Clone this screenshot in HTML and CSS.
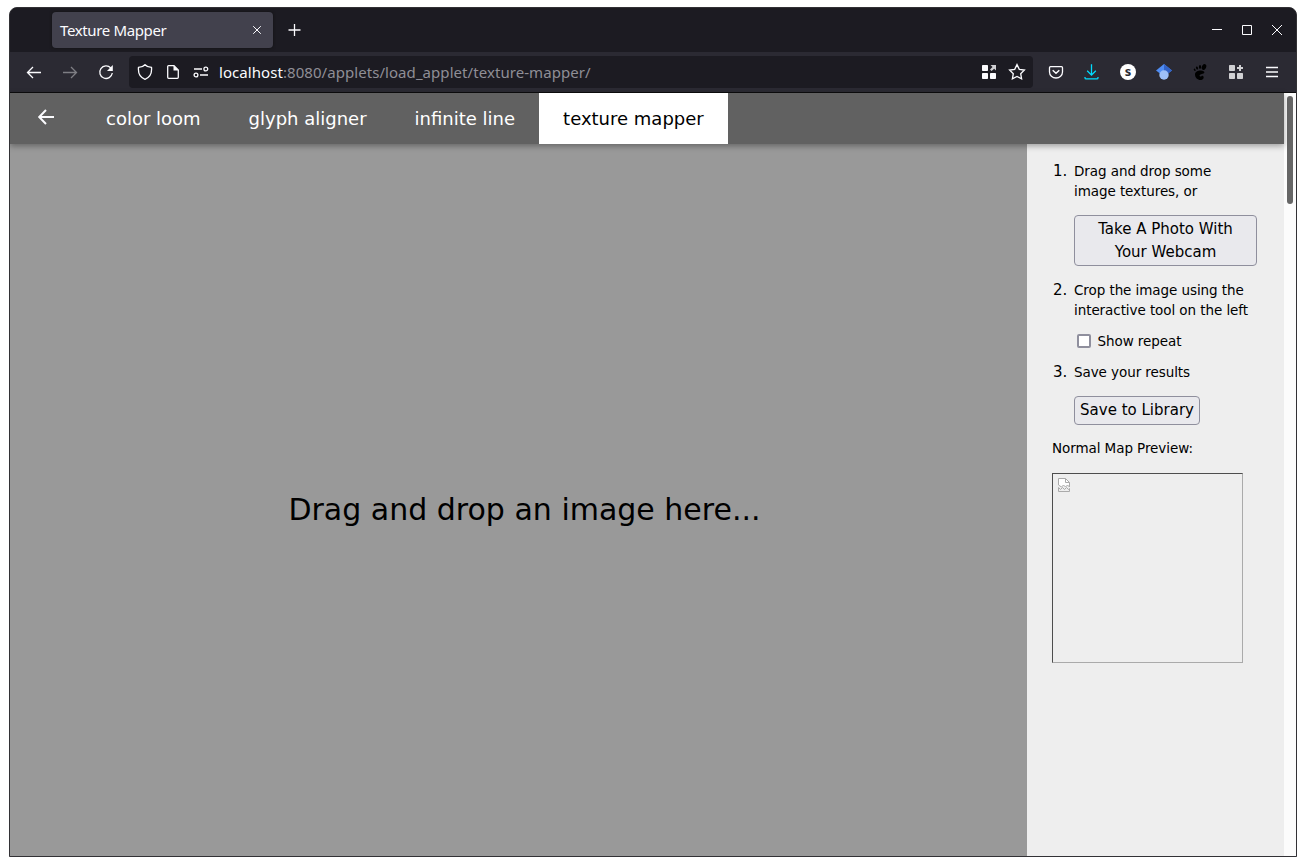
FILE: index.html
```html
<!DOCTYPE html>
<html lang="en">
<head>
<meta charset="utf-8">
<title>Texture Mapper</title>
<link rel="stylesheet" href="styles.css">
</head>
<body>
<div class="window">
  <header class="tabbar">
    <div class="tab"><span class="tab-title">Texture Mapper</span>
      <svg class="tab-close" width="10" height="10" viewBox="0 0 10 10"><path d="M1.200 1.200l7.600 7.600M8.800 1.200L1.200 8.800"/></svg>
    </div>
    <svg class="plus" width="14" height="14" viewBox="0 0 14 14"><path d="M6.500 1v12M.5 7h12"/></svg>
    <div class="controls">
      <svg width="12" height="12" viewBox="0 0 12 12"><path d="M1 5.500h10"/></svg>
      <svg width="12" height="12" viewBox="0 0 12 12"><path d="M1.500 1.500h9v9h-9z"/></svg>
      <svg width="12" height="12" viewBox="0 0 12 12"><path d="M1 1l10 10M11 1L1 11"/></svg>
    </div>
  </header>
  <div class="toolbar">
    <div class="nav-icons">
      <svg width="16" height="16" viewBox="0 0 16 16"><path d="M15 8.500H1.500M7 3L1.500 8.500 7 14"/></svg>
      <svg class="dim" width="16" height="16" viewBox="0 0 16 16"><path d="M1 8.500h13.500M9 3l5.500 5.500L9 14"/></svg>
      <svg width="16" height="16" viewBox="0 0 16 16"><path d="M12.800 4A6.300 6.300 0 1 0 14.300 9"/><path class="fill" d="M14.800 1v6H9z"/></svg>
    </div>
    <div class="urlbar">
      <svg width="16" height="16" viewBox="0 0 16 16"><path d="M8 .8C6.500 2.500 4 3.300 1.500 3.400 1 8.500 3 13.500 8 15.300c5-1.800 7-6.800 6.500-11.900C12 3.300 9.500 2.500 8 .8z"/></svg>
      <svg width="16" height="16" viewBox="0 0 16 16"><path d="M3.500 1.700H9l4.300 4.300v7.300q0 1-1 1H3.700q-1 0-1-1V2.500q0-.8.8-.8z"/><path class="fill" d="M8.500 1.500v5h5z"/></svg>
      <svg width="16" height="16" viewBox="0 0 16 16"><path d="M1 5h8M7 11h8"/><circle cx="12.800" cy="5" r="1.900"/><circle cx="3" cy="11" r="1.900"/></svg>
      <span class="url"><b>localhost</b>:8080/applets/load_applet/texture-mapper/</span>
      <svg class="solid" width="16" height="16" viewBox="0 0 16 16"><rect x="1" y="1" width="6" height="6" rx=".8"/><rect x="1" y="9" width="6" height="6" rx=".8"/><rect x="9" y="9" width="6" height="6" rx=".8"/><path class="pale" d="M9.500 1H15v5.500l-1.800-1.800L10.500 7 9 5.500l2.500-2.600z"/></svg>
      <svg class="star" width="18" height="18" viewBox="0 0 18 18"><path d="M9 1.600l2.300 4.700 5.100.7-3.700 3.700.9 5.200L9 13.400l-4.600 2.500.9-5.200L1.600 7l5.100-.7z"/></svg>
    </div>
    <div class="extensions">
      <svg width="16" height="16" viewBox="0 0 16 16"><path d="M2.500 2.700h11q1 0 1 1V8a6.500 6 0 0 1-13 0V3.700q0-1 1-1z"/><path class="chevron" d="M4.700 6.200L8 9.300l3.300-3.100"/></svg>
      <svg class="download" width="16" height="16" viewBox="0 0 16 16"><path d="M7.500.2v11M3.200 6.700l4.300 4.400 4.300-4.400M1 13v.7q0 1.200 1.200 1.200h10.600q1.200 0 1.200-1.200V13"/></svg>
      <span class="s-badge">s</span>
      <svg class="scholar" width="16" height="16" viewBox="0 0 16 16"><path fill="#4f8cf3" d="M8 0L0 6.500 4 9.500h8l4-3z"/><path fill="#3262c5" d="M8 0l8 6.500-4 3L8 7z"/><circle cx="8" cy="11" r="4.700" fill="#9dc0f9"/></svg>
      <svg class="foot" width="16" height="16" viewBox="0 0 16 16"><ellipse cx="12" cy="3" rx="2.100" ry="3" transform="rotate(25 12 3)"/><ellipse cx="8" cy="2.900" rx="1.100" ry="1.900"/><ellipse cx="5" cy="4" rx="1" ry="1.600" transform="rotate(-20 5 4)"/><ellipse cx="2.700" cy="5.800" rx=".8" ry="1.300" transform="rotate(-30 2.700 5.800)"/><path d="M12 7.500C9 5.500 3 7 3 10.500c0 3 2.500 5.500 5.500 5.500 2.800 0 4-2.500 2.500-4-1-.8-1.500.5-2.500.5S7 11 8.500 10.500 13.500 9.500 12 7.500z"/></svg>
      <svg class="solid pale" width="16" height="16" viewBox="0 0 16 16"><rect x="1" y="1" width="6" height="6" rx=".8"/><rect x="1" y="9" width="6" height="6" rx=".8"/><rect x="9" y="9" width="6" height="6" rx=".8"/><path d="M11 1h2v2h2v2h-2v2h-2V5H9V3h2z"/></svg>
      <svg width="16" height="16" viewBox="0 0 16 16"><path d="M2 3.500h12M2 8h12M2 12.500h12"/></svg>
    </div>
  </div>
  <div class="viewport">
    <div class="page">
      <nav class="appbar">
        <svg class="back" width="18" height="18" viewBox="0 0 18 18"><path d="M17 9H2.500M9 2L2.200 9 9 16"/></svg>
        <a class="link">color loom</a><a class="link">glyph aligner</a><a class="link">infinite line</a><a class="link active">texture mapper</a>
      </nav>
      <main class="workspace">
        <section class="drop"><span class="drop-text">Drag and drop an image here...</span></section>
        <aside class="panel">
          <div class="step"><span class="num">1.</span><p class="copy">Drag and drop some<br>image textures, or</p></div>
          <button class="btn photo">Take A Photo With<br>Your Webcam</button>
          <div class="step crop"><span class="num">2.</span><p class="copy">Crop the image using the<br>interactive tool on the left</p></div>
          <label class="repeat"><span class="box"></span><span class="copy">Show repeat</span></label>
          <div class="step"><span class="num">3.</span><p class="copy">Save your results</p></div>
          <button class="btn save">Save to Library</button>
          <p class="copy preview-title">Normal Map Preview:</p>
          <div class="preview"><svg width="12" height="14" viewBox="0 0 12 14"><path class="paper" d="M.5 7V.5h7l4 4V9l-2-2-2 2-2-2-2 2z"/><path d="M7.500.5v4h4M.5 13.500v-4l2 2 2-2 2 2 2-2 2 2 1-1v3z"/></svg></div>
        </aside>
      </main>
    </div>
    <div class="scrollbar"><div class="thumb"></div></div>
  </div>
</div>
</body>
</html>
```
FILE: styles.css
```css
* { box-sizing: border-box; }
body { margin: 0; padding: 7px 9px; background: #fff; font-family: "DejaVu Sans", sans-serif; color: #000; }
p { margin: 0; }
svg { display: block; flex: none; fill: none; stroke: #fbfbfe; stroke-width: 1.3; }
.window { width: 1288px; height: 850px; border: 1px solid #323135; border-radius: 8px 8px 0 0; overflow: hidden; display: flex; flex-direction: column; background: #1c1b22; }

.tabbar { height: 44px; flex: none; display: flex; align-items: center; padding: 0 13px 0 42px; background: #1c1b22; }
.tab { width: 221px; height: 36px; border-radius: 4px; background: #42414d; box-shadow: 0 0 3px #111; display: flex; align-items: center; justify-content: space-between; padding: 0 11px 0 8px; }
.tab-title { font: 15px/20px "Noto Sans", sans-serif; letter-spacing: -.36px; color: #fbfbfe; }
.tab-close { stroke-width: 1; }
.plus { margin-left: 15px; }
.controls { margin-left: auto; display: flex; gap: 18px; }
.controls svg { stroke-width: 1; }

.toolbar { height: 41px; flex: none; display: flex; align-items: center; background: #2b2a33; border-bottom: 1px solid #0c0c0d; padding-left: 16px; }
.nav-icons { display: flex; gap: 20px; }
.dim { opacity: .4; }
.fill { fill: #fbfbfe; stroke: none; }
.chevron { stroke-width: 1.500; }
.urlbar { width: 904px; height: 32px; margin-left: 15px; padding: 0 7px 0 8px; border-radius: 4px; background: #1c1b22; display: flex; align-items: center; gap: 12px; }
.url { margin-left: -2px; flex: 1; font: 15px/20px "Noto Sans", sans-serif; letter-spacing: .06px; color: #8f8e96; white-space: nowrap; }
.url b { font-weight: 400; color: #fbfbfe; }
.solid, .solid .pale { fill: #fbfbfe; stroke: none; }
.solid.pale, .solid .pale { fill: #d0d0d3; }
.star { margin-left: -1px; }
.extensions { display: flex; align-items: center; gap: 20px; margin-left: 15px; }
.download { stroke: #00ddff; }
.s-badge { width: 16px; height: 16px; border-radius: 50%; background: #fff; color: #2b2a33; font: bold 13px/14px "Noto Sans", sans-serif; text-align: center; }
.scholar { stroke: none; }
.foot { fill: #000; stroke: none; }

.viewport { flex: 1; min-height: 0; display: flex; }
.page { flex: 1; display: flex; flex-direction: column; }
.appbar { height: 51px; flex: none; background: #616161; box-shadow: 0 2px 6px rgba(0,0,0,.35); z-index: 1; position: relative; display: flex; align-items: center; padding-left: 27px; }
.back { stroke-width: 2; margin: 0 27px 3px 0; }
.link { height: 51px; padding: 0 24px; font-size: 18px; line-height: 51px; color: #fff; white-space: nowrap; }
.link.active { background: #fff; color: #000; }
.workspace { flex: 1; display: flex; min-height: 0; }
.drop { width: 1017px; background: #999; display: flex; align-items: center; justify-content: center; padding: 0 0 0 12px; }
.drop-text { font-size: 30px; line-height: 40px; margin-top: 20px; }
.panel { flex: 1; background: #eee; padding: 17px 0 0 25px; display: flex; flex-direction: column; align-items: flex-start; }
.step { display: flex; }
.num { width: 22px; font-size: 15px; line-height: 20px; padding-left: 1px; }
.copy { font-size: 13.500px; line-height: 20px; letter-spacing: -.075px; white-space: nowrap; }
.btn { margin: 0 0 0 22px; padding: 0 4px; background: #e9e9ed; border: 1px solid #8f8f9d; border-radius: 4px; color: #000; font: 15px/23px "DejaVu Sans", sans-serif; white-space: nowrap; }
.photo { width: 183px; height: 51px; margin-top: 14px; }
.crop { margin-top: 14px; }
.repeat { display: flex; align-items: center; gap: 6.500px; margin: 11px 0 11px 25px; }
.box { width: 14px; height: 14px; border: 2px solid #8f8f9d; border-radius: 2px; background: #fff; }
.save { width: 126px; height: 29px; margin-top: 14px; }
.preview-title { margin-top: 13px; }
.preview { width: 191px; height: 190px; margin-top: 15px; border: 1px solid; border-color: #4d4d4d #aaa #aaa #4d4d4d; padding: 4px 5px; }
.preview svg { stroke: #aaa; stroke-width: 1; }
.paper { fill: #fff; }
.scrollbar { width: 12px; background: #fcfcfc; padding: 3px; }
.thumb { width: 6px; height: 108px; border-radius: 3px; background: #666; }
```
